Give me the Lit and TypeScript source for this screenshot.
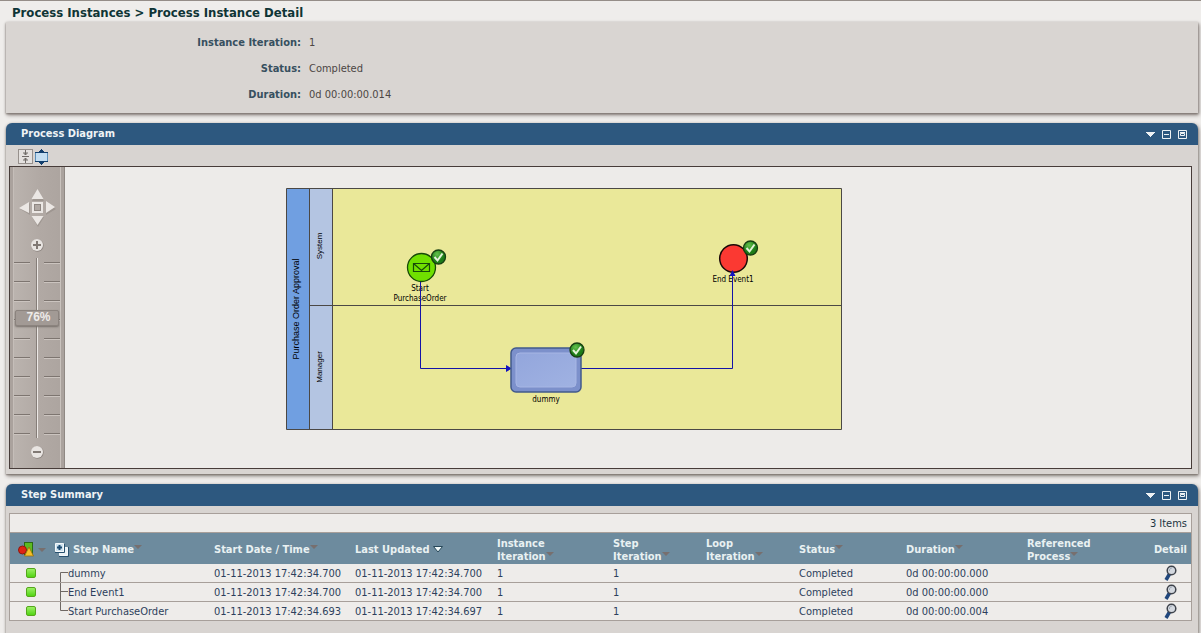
import { LitElement, html, css, svg, nothing } from "lit";
import { customElement, property, state } from "lit/decorators.js";

type Step = {
  name: string;
  started: string;
  updated: string;
  instance: number;
  step: number;
  status: string;
  duration: string;
};

const STEPS: Step[] = [
  { name: "dummy", started: "01-11-2013 17:42:34.700", updated: "01-11-2013 17:42:34.700", instance: 1, step: 1, status: "Completed", duration: "0d 00:00:00.000" },
  { name: "End Event1", started: "01-11-2013 17:42:34.700", updated: "01-11-2013 17:42:34.700", instance: 1, step: 1, status: "Completed", duration: "0d 00:00:00.000" },
  { name: "Start PurchaseOrder", started: "01-11-2013 17:42:34.693", updated: "01-11-2013 17:42:34.697", instance: 1, step: 1, status: "Completed", duration: "0d 00:00:00.004" },
];

const COLUMN_WIDTHS = [45, 159, 141, 142, 116, 93, 93, 107, 121, 123, 41];

const FACTS: [string, string][] = [
  ["Instance Iteration:", "1"],
  ["Status:", "Completed"],
  ["Duration:", "0d 00:00:00.014"],
];

const base = css`
  * {
    box-sizing: border-box;
  }
  button {
    appearance: none;
    background: none;
    border: 0;
    padding: 0;
    margin: 0;
    font: inherit;
    color: inherit;
    text-align: left;
    cursor: pointer;
  }
  svg {
    display: block;
  }
`;

@customElement("portal-panel")
export class PortalPanel extends LitElement {
  @property() heading = "";

  static styles = [
    base,
    css`
      :host {
        display: flex;
        flex-direction: column;
        background: #d8d4d1;
        border-radius: 6px 6px 0 0;
        box-shadow: 0 1px 2px #7d7570, 1px 2px 4px #8c8580;
      }
      .bar {
        display: flex;
        align-items: center;
        justify-content: space-between;
        height: 22px;
        padding: 0 11px 0 15px;
        background: #2d587f;
        border-radius: 6px 6px 0 0;
        color: #eff3f5;
      }
      .title {
        margin: 0;
        font-size: 11px;
        line-height: 22px;
        font-weight: bold;
      }
      .tools {
        display: flex;
        align-items: center;
        gap: 7px;
      }
      .body {
        flex: 1;
      }
    `,
  ];

  render() {
    return html`
      <header class="bar">
        <h2 class="title">${this.heading}</h2>
        <div class="tools">
          <button aria-label="Panel menu">
            <svg width="9" height="9" viewBox="0 0 9 9"><path d="M0 2h9v1h-1v1h-1v1h-1v1h-1v1h-1v-1h-1v-1h-1v-1h-1v-1h-1z" fill="#eef2f4" /></svg>
          </button>
          <button aria-label="Minimize panel">
            <svg width="9" height="9" viewBox="0 0 9 9" fill="none" stroke="#eef2f4"><path d="M.5.5h8v8h-8zM2 4.500h5" /></svg>
          </button>
          <button aria-label="Maximize panel">
            <svg width="9" height="9" viewBox="0 0 9 9" fill="none" stroke="#eef2f4"><path d="M.5.5h8v8h-8zM2.500 3.500h4v2h-4zM2 2.500h5" /></svg>
          </button>
        </div>
      </header>
      <div class="body"><slot></slot></div>
    `;
  }
}

@customElement("zoom-control")
export class ZoomControl extends LitElement {
  @state() private level = 76;

  static styles = [
    base,
    css`
      :host {
        display: flex;
        flex-direction: column;
        align-items: center;
        width: 55px;
        padding: 22px 2px 9px;
        background: linear-gradient(90deg, #bcb5b0, #b1a9a4 55%, #aca49f);
        border-right: 1px solid #8f8883;
        box-shadow: inset 3px 0 0 #aaa29d, inset 4px 0 0 #c5beb9, inset -3px 0 0 #aaa29d, inset -4px 0 0 #c9c2bd;
      }
      .round {
        margin-top: 11px;
      }
      .round.minus {
        margin-top: 7px;
      }
      .scale {
        position: relative;
        display: grid;
        place-items: center;
        width: 48px;
        height: 180px;
        margin-top: 6px;
      }
      .ticks {
        grid-area: 1 / 1;
      }
      .range {
        grid-area: 1 / 1;
        appearance: none;
        writing-mode: vertical-lr;
        direction: rtl;
        width: 44px;
        height: 180px;
        margin: 0;
        background: none;
      }
      .range::-webkit-slider-runnable-track {
        width: 44px;
        background: none;
      }
      .range::-webkit-slider-thumb {
        appearance: none;
        width: 44px;
        height: 16px;
        background: #a29a95;
        border: 1px solid #8b837e;
        border-radius: 2px;
        box-shadow: 0 1px 2px #77706b;
      }
      .level {
        position: absolute;
        left: 3px;
        right: 0;
        top: 51px;
        text-align: center;
        font: bold 12px/16px "Liberation Sans", sans-serif;
        color: #eeebe9;
        pointer-events: none;
      }
    `,
  ];

  private onInput(e: Event) {
    this.level = Number((e.target as HTMLInputElement).value);
  }

  render() {
    const ticks = Array.from({ length: 10 }, (_, i) => 4 + i * 19);
    return html`
      <button aria-label="Pan and fit">
        <svg width="38" height="38" viewBox="0 0 38 38">
          <g fill="#8d8580" opacity=".5" transform="translate(1 1)"><path d="M19 1l6 10H13zM19 37l6-10H13zM1 19l10-6v12zM37 19l-10-6v12z" /></g>
          <path d="M19.500 0l6 10h-12zM19.500 36l6-9h-12zM1 19l10-6v11zM37 18l-9-6v12z" fill="#ebe7e4" />
          <rect x="15" y="14" width="9" height="9" fill="none" stroke="#ebe7e4" stroke-width="2" />
          <rect x="16.500" y="15.500" width="6" height="6" fill="#b0a8a3" stroke="#8f8782" />
        </svg>
      </button>
      <button class="round" aria-label="Zoom in" @click=${() => (this.level = Math.min(108, this.level + 1))}>
        <svg width="14" height="14" viewBox="0 0 14 14"><circle cx="7.500" cy="7.500" r="6.200" fill="#8d8580" /><circle cx="7" cy="7" r="6" fill="#e9e5e2" /><path d="M7 3v8M3 7h8" stroke="#817974" stroke-width="2" /></svg>
      </button>
      <div class="scale">
        <svg class="ticks" width="48" height="180" viewBox="0 0 48 180">
          ${ticks.map(
            (y) => svg`<path d="M1 ${y + 0.5}h16M31 ${y + 0.5}h16" stroke="#7d7570" /><path d="M1 ${y + 1.5}h16M31 ${y + 1.5}h16" stroke="#cbc4bf" />`,
          )}
          <path d="M23.500 0v180" stroke="#857d78" />
          <path d="M24.500 0v180" stroke="#ece8e5" />
        </svg>
        <input class="range" type="range" aria-label="Zoom level" min="8" max="108" .value=${String(this.level)} @input=${this.onInput} />
        <output class="level">${this.level}%</output>
      </div>
      <button class="round minus" aria-label="Zoom out" @click=${() => (this.level = Math.max(8, this.level - 1))}>
        <svg width="14" height="14" viewBox="0 0 14 14"><circle cx="7.500" cy="7.500" r="6.200" fill="#8d8580" /><circle cx="7" cy="7" r="6" fill="#e9e5e2" /><path d="M3 7h8" stroke="#817974" stroke-width="2" /></svg>
      </button>
    `;
  }
}

@customElement("process-diagram")
export class ProcessDiagram extends LitElement {
  static styles = [
    base,
    css`
      :host {
        display: block;
      }
      .lane {
        font: 8px "Liberation Sans", sans-serif;
        text-anchor: middle;
      }
      .pool {
        font: 9px "Liberation Sans", sans-serif;
        text-anchor: middle;
      }
      .node {
        font: 8px "DejaVu Sans Condensed", "DejaVu Sans", sans-serif;
        font-stretch: condensed;
        text-anchor: middle;
      }
    `,
  ];

  private done(x: number, y: number) {
    return svg`<g transform="translate(${x} ${y})">
      <circle r="7" fill="url(#done)" stroke="#173f12" stroke-width="1.300" />
      <path d="M-4 0l3 3.500 5-7" fill="none" stroke="#e4f3da" stroke-width="2" />
    </g>`;
  }

  render() {
    return html`
      <svg width="556" height="242" viewBox="0 0 556 242" role="img" aria-label="Purchase Order Approval process">
        <defs>
          <radialGradient id="done" cx=".4" cy=".3"><stop offset="0" stop-color="#63c24c" /><stop offset="1" stop-color="#1d7c18" /></radialGradient>
          <linearGradient id="task" x2="1" y2="1"><stop offset="0" stop-color="#93a6dc" /><stop offset="1" stop-color="#a0b2e2" /></linearGradient>
        </defs>
        <rect x=".5" y=".5" width="555" height="241" fill="#eae899" />
        <rect x=".5" y=".5" width="23" height="241" fill="#709fe1" />
        <rect x="23.500" y=".5" width="23" height="241" fill="#b4c5e2" />
        <path d="M.5.5h555v241H.5zM23.500 0v242M46.500 0v242M23.500 117.500h532" fill="none" stroke="#4b4845" />
        <text class="pool" transform="translate(13 121) rotate(-90)">Purchase Order Approval</text>
        <text class="lane" transform="translate(36 58) rotate(-90)">System</text>
        <text class="lane" transform="translate(36 179) rotate(-90)">Manager</text>

        <circle cx="135.500" cy="79.500" r="14" fill="#70e000" stroke="#174a08" stroke-width="1.300" />
        <path d="M127.500 75.500h16v8h-16zM127.500 75.500l8 7 8-7" fill="none" stroke="#174a08" stroke-width="1.200" />
        <text class="node" x="134" y="103">Start</text>
        <text class="node" x="134" y="113">PurchaseOrder</text>

        <circle cx="447.500" cy="70.500" r="13.800" fill="#fb3932" stroke="#1a0a08" stroke-width="1.500" />
        <text class="node" x="447" y="94">End Event1</text>

        <path d="M134.500 94v86.500h86M295 180.500h151.500V87" fill="none" stroke="#1413a8" />
        <path d="M220 177l6 3.500-6 3.500zM443.500 88l3-6 3 6z" fill="#1413c0" />

        <rect x="225" y="160" width="70" height="44" rx="5" fill="#7c90cb" stroke="#42598c" stroke-width="1.500" />
        <rect x="230" y="165" width="60" height="34" rx="4" fill="url(#task)" stroke="#a7b6e4" />
        <text class="node" x="260" y="214">dummy</text>

        ${this.done(152.5, 69)} ${this.done(464.5, 60)} ${this.done(291, 162)}
      </svg>
    `;
  }
}

@customElement("app-root")
export class AppRoot extends LitElement {
  static styles = [
    base,
    css`
      :host {
        display: flex;
        flex-direction: column;
        min-height: 100vh;
        background: #efedeb;
        border-top: 1px solid #958d88;
        font: 11px/13px "DejaVu Sans Condensed", "DejaVu Sans", sans-serif;
        font-stretch: condensed;
        color: #2d3f5c;
      }
      .crumbs {
        height: 21px;
        margin: 0;
        padding-left: 12px;
        font-size: 13px;
        line-height: 23px;
        font-weight: bold;
        color: #0f3536;
      }
      .link {
        color: inherit;
        text-decoration: none;
      }
      .main {
        flex: 1;
        display: flex;
        flex-direction: column;
        gap: 10px;
        padding: 0 3px 0 6px;
      }
      .facts {
        display: grid;
        grid-template-columns: 295px 1fr;
        column-gap: 8px;
        row-gap: 13px;
        margin: 0;
        padding: 14px 0 12px;
        background: #d9d5d2;
        box-shadow: 0 1px 2px #7d7570, 1px 2px 4px #8c8580;
      }
      .term {
        text-align: right;
        font-weight: bold;
        color: #37505f;
      }
      .value {
        margin: 0;
        color: #4c4644;
      }
      .toolbar {
        display: flex;
        align-items: flex-start;
        gap: 1px;
        height: 21px;
        padding: 4px 0 0 12px;
      }
      .canvas {
        display: flex;
        height: 303px;
        margin: 0 6px 5px 3px;
        border: 1px solid #473c39;
        background: #edebe9;
      }
      .stage {
        flex: 1;
        min-width: 0;
        overflow: hidden;
        padding: 21px 0 0 221px;
      }
      .last {
        flex: 1;
      }
      .grid {
        margin: 7px 6px 12px 3px;
        border: 1px solid #a79f9a;
        border-bottom: 0;
        background: #eeecea;
      }
      .count {
        margin: 0;
        height: 19px;
        padding-right: 4px;
        border-bottom: 1px solid #a79f9a;
        text-align: right;
        line-height: 20px;
        color: #1c3443;
      }
      .steps {
        width: 100%;
        table-layout: fixed;
        border-collapse: separate;
        border-spacing: 0;
      }
      .head {
        height: 31px;
        padding: 2px 0 0;
        background: #6d8b9e;
        color: #e9f1f2;
        text-align: left;
        vertical-align: middle;
        font-weight: bold;
      }
      .head.end {
        padding-right: 4px;
        text-align: right;
      }
      .pics {
        display: flex;
        align-items: center;
        gap: 4px;
      }
      .status {
        padding-left: 8px;
      }
      .caret {
        display: inline-block;
        vertical-align: 4px;
      }
      .sorted {
        display: inline-block;
        margin-left: 4px;
      }
      .cell {
        height: 19px;
        padding: 0;
        border-bottom: 1px solid #a79f9a;
        white-space: nowrap;
      }
      .dot {
        width: 10px;
        height: 10px;
        margin-left: 16px;
        border: 1px solid #55a61c;
        border-radius: 2px;
        background: linear-gradient(#9bf064, #52d414);
      }
      .branch {
        display: flex;
        align-items: center;
        padding-left: 5px;
      }
      .find {
        display: block;
        margin: 0 14px 0 auto;
      }
    `,
  ];

  private caret() {
    return html`<svg class="caret" width="8" height="4" viewBox="0 0 8 4"><path d="M0 0h8L4 4z" fill="#776f6e" /></svg>`;
  }

  private heads() {
    const plain: [string, string?][] = [["Instance", "Iteration"], ["Step", "Iteration"], ["Loop", "Iteration"], ["Status"], ["Duration"], ["Referenced", "Process"]];
    return html`
      <th class="head" scope="col">
        <button class="pics status" aria-label="Sort by step state">
          <svg width="16" height="15" viewBox="0 0 16 15">
            <rect x="6.500" y=".5" width="8" height="12" fill="#5cbb22" stroke="#2b6a14" />
            <circle cx="4.500" cy="8" r="4" fill="#df2413" stroke="#8e180f" />
            <path d="M11 5l4.500 9h-9z" fill="#f6c026" stroke="#946c12" stroke-width=".8" />
          </svg>
          ${this.caret()}
        </button>
      </th>
      <th class="head" scope="col">
        <span class="pics">
          <button aria-label="Expand all">
            <svg width="14" height="14" viewBox="0 0 14 14">
              <path d="M4.500 4.500h8v8h-8z" fill="#e9f1f5" stroke="#f4f8fa" />
              <path d="M4 13.500h9.500V4" fill="none" stroke="#28516f" />
              <path d="M.5.5h8v8h-8z" fill="#cfe3ef" stroke="#f4f8fa" />
              <path d="M4.500 2v5M2 4.500h5" stroke="#1d4c73" stroke-width="2" />
              <path d="M0 9.500h9.500V1" fill="none" stroke="#28516f" />
            </svg>
          </button>
          <button>Step Name${this.caret()}</button>
        </span>
      </th>
      <th class="head" scope="col"><button>Start Date / Time${this.caret()}</button></th>
      <th class="head" scope="col" aria-sort="descending">
        <button>Last Updated<svg class="sorted" width="10" height="7" viewBox="0 0 10 7"><path d="M.5.5h9L5 6z" fill="#f0f8f8" stroke="#27485a" /></svg></button>
      </th>
      ${plain.map(
        ([a, b]) => html`<th class="head" scope="col"><button>${a}${b ? html`<br />${b}` : nothing}${this.caret()}</button></th>`,
      )}
      <th class="head end" scope="col">Detail</th>
    `;
  }

  private row(s: Step, i: number) {
    const stem = i === 0 ? "M.5 18V8.500" : i === STEPS.length - 1 ? "M.5 0v8.500" : "M.5 0v18";
    return html`
      <tr>
        <td class="cell"><div class="dot" role="img" aria-label=${s.status}></div></td>
        <td class="cell">
          <div class="branch">
            <svg width="8" height="18" viewBox="0 0 8 18"><path d="${stem}M.5 8.500h8" fill="none" stroke="#6f6864" /></svg>
            <span>${s.name}</span>
          </div>
        </td>
        <td class="cell">${s.started}</td>
        <td class="cell">${s.updated}</td>
        <td class="cell">${s.instance}</td>
        <td class="cell">${s.step}</td>
        <td class="cell"></td>
        <td class="cell">${s.status}</td>
        <td class="cell">${s.duration}</td>
        <td class="cell"></td>
        <td class="cell">
          <button class="find" aria-label="Detail of ${s.name}">
            <svg width="13" height="16" viewBox="0 0 13 16">
              <path d="M5.500 9L2 15" stroke="#21477c" stroke-width="3.500" />
              <circle cx="7.500" cy="5.500" r="4.300" fill="#d3d8df" stroke="#3e434b" stroke-width="1.500" />
              <path d="M5.500 6a2.500 2.500 0 0 1 2.500-3" fill="none" stroke="#9fa9b6" />
            </svg>
          </button>
        </td>
      </tr>
    `;
  }

  render() {
    return html`
      <h1 class="crumbs"><a class="link" href="#instances">Process Instances</a> &gt; Process Instance Detail</h1>
      <main class="main">
        <dl class="facts">
          ${FACTS.map(([k, v]) => html`<dt class="term">${k}</dt><dd class="value">${v}</dd>`)}
        </dl>
        <portal-panel heading="Process Diagram">
          <div class="toolbar">
            <button aria-label="Collapse diagram">
              <svg width="15" height="15" viewBox="0 0 15 15">
                <rect x=".5" y=".5" width="14" height="14" fill="#e4e1df" stroke="#97918d" />
                <path d="M4 7.500h7M7.500 1v5M7.500 9v5M5 4h5M6 5h3M5 11h5M6 10h3" stroke="#716c69" />
              </svg>
            </button>
            <button aria-label="Expand diagram">
              <svg width="15" height="16" viewBox="0 0 15 16">
                <rect x="1.500" y="3.500" width="12" height="9" fill="#c4def2" stroke="#5b90bb" />
                <path d="M1 3.500h13M1 12.500h13M7.500 0v3M7.500 13v3M5 2.500h5M6 1.500h3M5 13.500h5M6 14.500h3" stroke="#123f6d" />
              </svg>
            </button>
          </div>
          <div class="canvas">
            <zoom-control></zoom-control>
            <div class="stage"><process-diagram></process-diagram></div>
          </div>
        </portal-panel>
        <portal-panel class="last" heading="Step Summary">
          <div class="grid">
            <p class="count">${STEPS.length} Items</p>
            <table class="steps" aria-label="Step Summary">
              <colgroup>
                ${COLUMN_WIDTHS.map((w) => html`<col style="width:${w}px" />`)}
              </colgroup>
              <thead>
                <tr>${this.heads()}</tr>
              </thead>
              <tbody>
                ${STEPS.map((s, i) => this.row(s, i))}
              </tbody>
            </table>
          </div>
        </portal-panel>
      </main>
    `;
  }
}
